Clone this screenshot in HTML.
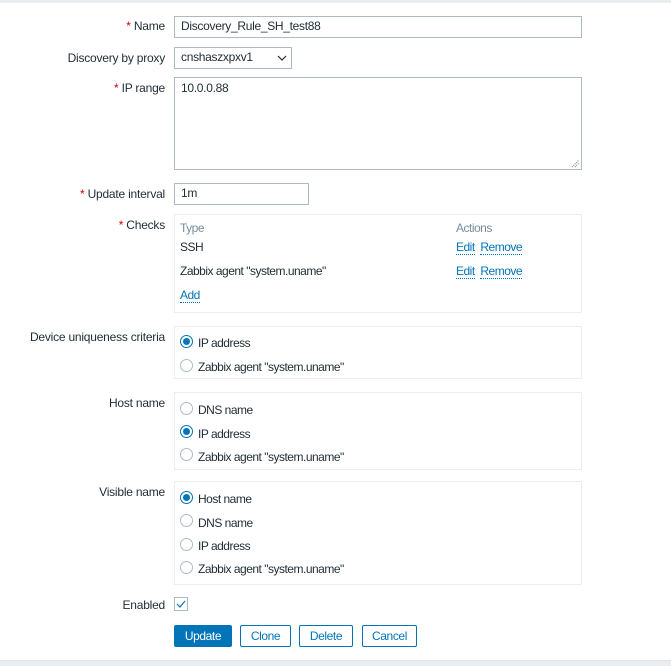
<!DOCTYPE html>
<html><head><style>
body{margin:0;width:671px;height:665px;background:#fff;position:relative;overflow:hidden;font-family:"Liberation Sans",Arial,sans-serif;font-size:12px;color:#1f2c33}
.a{position:absolute}
.top{left:0;top:0;width:671px;height:3px;background:#ebeef0}
.bot{left:0;top:660px;width:671px;height:5px;background:#ebeef0;border-top:1px solid #dfe4e7}
.lbl{right:506px;text-align:right;white-space:nowrap;letter-spacing:-0.22px}
.st{color:#d40000}
.inp{border:1px solid #acbbc2;box-sizing:border-box;background:#fff;padding-left:6px;line-height:19px;letter-spacing:-0.3px}
.box{border:1px solid #ebeef0;box-sizing:border-box;left:174px;width:408px}
.rad{width:13px;height:13px;border:1px solid #acbbc2;border-radius:50%;box-sizing:border-box;left:180px}
.rad.on{border-color:#0275b8}
.rad.on::after{content:"";position:absolute;left:2px;top:2px;width:7px;height:7px;border-radius:50%;background:#0275b8}
.rt{left:198px;letter-spacing:-0.5px;white-space:nowrap}
.tx{letter-spacing:-0.5px;white-space:nowrap}
.lnk{color:#0275b8;border-bottom:1px dotted #0275b8;line-height:13px}
.btn{top:625px;height:22px;box-sizing:border-box;border:1px solid #0275b8;border-radius:2px;color:#0275b8;text-align:center;line-height:20px;letter-spacing:-0.4px}
</style></head><body>
<div class="a top"></div>
<div class="a bot"></div>

<div class="a lbl" style="top:19px"><span class="st">*</span> Name</div>
<div class="a inp" style="left:174px;top:16px;width:408px;height:22px">Discovery_Rule_SH_test88</div>

<div class="a lbl" style="top:51px">Discovery by proxy</div>
<div class="a inp" style="left:174px;top:47px;width:118px;height:22px">cnshaszxpxv1</div>
<svg class="a" style="left:277px;top:55px" width="10" height="6"><path d="M1 1L5 5L9 1" stroke="#1f2c33" stroke-width="1.2" fill="none"/></svg>

<div class="a lbl" style="top:81px"><span class="st">*</span> IP range</div>
<div class="a inp" style="left:174px;top:77px;width:408px;height:93px;padding-top:1px">10.0.0.88</div>
<svg class="a" style="left:571px;top:159px" width="9" height="9"><path d="M1 8L8 1M4 8L8 4" stroke="#777" stroke-width="1" stroke-dasharray="1 1"/></svg>

<div class="a lbl" style="top:187px"><span class="st">*</span> Update interval</div>
<div class="a inp" style="left:174px;top:183px;width:135px;height:22px">1m</div>

<div class="a lbl" style="top:218px"><span class="st">*</span> Checks</div>
<div class="a box" style="top:214px;height:99px"></div>
<div class="a tx" style="left:180px;top:221px;color:#768d99">Type</div>
<div class="a tx" style="left:456px;top:221px;color:#768d99">Actions</div>
<div class="a tx" style="left:180px;top:240px">SSH</div>
<div class="a tx" style="left:456px;top:240px"><span class="lnk">Edit</span>&nbsp; <span class="lnk">Remove</span></div>
<div class="a tx" style="left:180px;top:264px">Zabbix agent "system.uname"</div>
<div class="a tx" style="left:456px;top:264px"><span class="lnk">Edit</span>&nbsp; <span class="lnk">Remove</span></div>
<div class="a tx" style="left:180px;top:288px"><span class="lnk">Add</span></div>

<div class="a lbl" style="top:330px">Device uniqueness criteria</div>
<div class="a box" style="top:326px;height:53px"></div>
<div class="a rad on" style="top:335px"></div><div class="a rt" style="top:336px">IP address</div>
<div class="a rad" style="top:359px"></div><div class="a rt" style="top:360px">Zabbix agent "system.uname"</div>

<div class="a lbl" style="top:396px">Host name</div>
<div class="a box" style="top:392px;height:78px"></div>
<div class="a rad" style="top:402px"></div><div class="a rt" style="top:403px">DNS name</div>
<div class="a rad on" style="top:425px"></div><div class="a rt" style="top:427px">IP address</div>
<div class="a rad" style="top:448px"></div><div class="a rt" style="top:450px">Zabbix agent "system.uname"</div>

<div class="a lbl" style="top:485px">Visible name</div>
<div class="a box" style="top:481px;height:104px"></div>
<div class="a rad on" style="top:491px"></div><div class="a rt" style="top:492px">Host name</div>
<div class="a rad" style="top:514px"></div><div class="a rt" style="top:516px">DNS name</div>
<div class="a rad" style="top:538px"></div><div class="a rt" style="top:539px">IP address</div>
<div class="a rad" style="top:561px"></div><div class="a rt" style="top:562px">Zabbix agent "system.uname"</div>

<div class="a lbl" style="top:598px">Enabled</div>
<div class="a" style="left:174px;top:597px;width:14px;height:14px;border:1px solid #acbbc2;box-sizing:border-box"></div>
<svg class="a" style="left:176px;top:599px" width="10" height="10"><path d="M1 5L4 8L9 2" stroke="#0275b8" stroke-width="1.2" fill="none"/></svg>

<div class="a btn" style="left:174px;width:58px;background:#0275b8;color:#fff">Update</div>
<div class="a btn" style="left:240px;width:51px">Clone</div>
<div class="a btn" style="left:299px;width:54px">Delete</div>
<div class="a btn" style="left:362px;width:55px">Cancel</div>
</body></html>
